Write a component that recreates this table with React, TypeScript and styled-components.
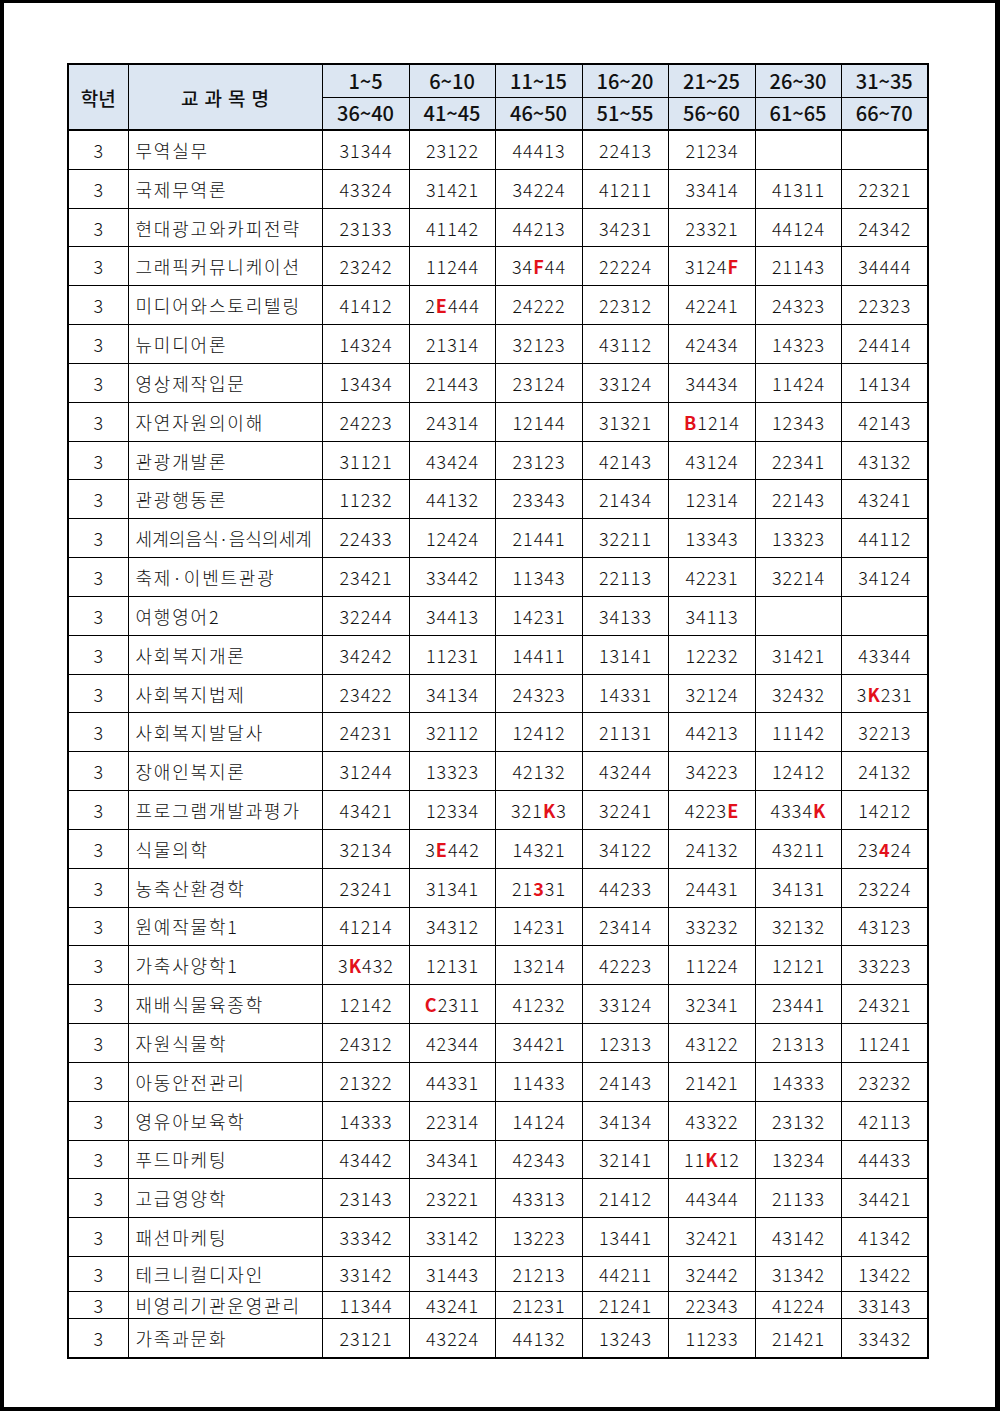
import React from "react";
import styled, { createGlobalStyle } from "styled-components";

const GlobalStyle = createGlobalStyle`
  html, body {
    margin: 0;
    padding: 0;
    background: #ffffff;
  }
`;

const Page = styled.div`
  box-sizing: border-box;
  width: 1000px;
  height: 1411px;
  border-style: solid;
  border-color: #000;
  border-width: 3px 5px 4px 4px;
  background: #fff;
  padding: 60px 0 0 63px;
  font-family: "Noto Sans CJK KR", "Noto Sans", sans-serif;
`;

const Table = styled.table`
  border-collapse: collapse;
  table-layout: fixed;
  width: 860px;
  border: 2px solid #000;
`;

const HeadCell = styled.th<{ $tall?: boolean; $wide?: boolean }>`
  background: #dce6f2;
  border: 1px solid #000;
  height: ${(p) => (p.$tall ? 64 : 31)}px;
  padding: 0;
  font-size: ${(p) => (p.$tall ? 19 : 20)}px;
  font-weight: 500;
  color: #111;
  text-align: center;
  letter-spacing: ${(p) => (p.$wide ? "6px" : "0")};
  text-indent: ${(p) => (p.$wide ? "6px" : "0")};
  line-height: 1;
`;

const HeadRow = styled.tr<{ $last?: boolean }>`
  border-bottom: ${(p) => (p.$last ? "2px solid #000" : "1px solid #000")};
`;

const Cell = styled.td<{ $h: number }>`
  border: 1px solid #000;
  height: ${(p) => p.$h}px;
  padding: 0;
  font-size: 18px;
  font-weight: 300;
  color: #111;
  text-align: center;
  letter-spacing: 1px;
  text-indent: 1px;
  line-height: 1;
  white-space: nowrap;
`;

const NameCell = styled(Cell)<{ $tight?: boolean }>`
  text-align: left;
  text-indent: 0;
  padding-left: 7px;
  letter-spacing: ${(p) => (p.$tight ? "0.1px" : "1.8px")};
`;

const Mark = styled.span`
  color: #e3111b;
  font-weight: 600;
`;

type Row = [string, string[]];

const rows: Row[] = [
  ["무역실무", ["31344", "23122", "44413", "22413", "21234", "", ""]],
  ["국제무역론", ["43324", "31421", "34224", "41211", "33414", "41311", "22321"]],
  ["현대광고와카피전략", ["23133", "41142", "44213", "34231", "23321", "44124", "24342"]],
  ["그래픽커뮤니케이션", ["23242", "11244", "34[F]44", "22224", "3124[F]", "21143", "34444"]],
  ["미디어와스토리텔링", ["41412", "2[E]444", "24222", "22312", "42241", "24323", "22323"]],
  ["뉴미디어론", ["14324", "21314", "32123", "43112", "42434", "14323", "24414"]],
  ["영상제작입문", ["13434", "21443", "23124", "33124", "34434", "11424", "14134"]],
  ["자연자원의이해", ["24223", "24314", "12144", "31321", "[B]1214", "12343", "42143"]],
  ["관광개발론", ["31121", "43424", "23123", "42143", "43124", "22341", "43132"]],
  ["관광행동론", ["11232", "44132", "23343", "21434", "12314", "22143", "43241"]],
  ["세계의음식·음식의세계", ["22433", "12424", "21441", "32211", "13343", "13323", "44112"]],
  ["축제·이벤트관광", ["23421", "33442", "11343", "22113", "42231", "32214", "34124"]],
  ["여행영어2", ["32244", "34413", "14231", "34133", "34113", "", ""]],
  ["사회복지개론", ["34242", "11231", "14411", "13141", "12232", "31421", "43344"]],
  ["사회복지법제", ["23422", "34134", "24323", "14331", "32124", "32432", "3[K]231"]],
  ["사회복지발달사", ["24231", "32112", "12412", "21131", "44213", "11142", "32213"]],
  ["장애인복지론", ["31244", "13323", "42132", "43244", "34223", "12412", "24132"]],
  ["프로그램개발과평가", ["43421", "12334", "321[K]3", "32241", "4223[E]", "4334[K]", "14212"]],
  ["식물의학", ["32134", "3[E]442", "14321", "34122", "24132", "43211", "23[4]24"]],
  ["농축산환경학", ["23241", "31341", "21[3]31", "44233", "24431", "34131", "23224"]],
  ["원예작물학1", ["41214", "34312", "14231", "23414", "33232", "32132", "43123"]],
  ["가축사양학1", ["3[K]432", "12131", "13214", "42223", "11224", "12121", "33223"]],
  ["재배식물육종학", ["12142", "[C]2311", "41232", "33124", "32341", "23441", "24321"]],
  ["자원식물학", ["24312", "42344", "34421", "12313", "43122", "21313", "11241"]],
  ["아동안전관리", ["21322", "44331", "11433", "24143", "21421", "14333", "23232"]],
  ["영유아보육학", ["14333", "22314", "14124", "34134", "43322", "23132", "42113"]],
  ["푸드마케팅", ["43442", "34341", "42343", "32141", "11[K]12", "13234", "44433"]],
  ["고급영양학", ["23143", "23221", "43313", "21412", "44344", "21133", "34421"]],
  ["패션마케팅", ["33342", "33142", "13223", "13441", "32421", "43142", "41342"]],
  ["테크니컬디자인", ["33142", "31443", "21213", "44211", "32442", "31342", "13422"]],
  ["비영리기관운영관리", ["11344", "43241", "21231", "21241", "22343", "41224", "33143"]],
  ["가족과문화", ["23121", "43224", "44132", "13243", "11233", "21421", "33432"]],
];

const rowHeight = (i: number) => {
  if (i === 29) return 34;
  if (i === 30) return 26;
  if (i === 31) return 37.5;
  return 37.83;
};

const topRanges = ["1~5", "6~10", "11~15", "16~20", "21~25", "26~30", "31~35"];
const bottomRanges = ["36~40", "41~45", "46~50", "51~55", "56~60", "61~65", "66~70"];
const colWidths = [60, 194, 87, 86, 87, 86, 87, 86, 87];

const Code = ({ value }: { value: string }) => {
  const parts = value.split(/(\[[^\]]+\])/).filter(Boolean);
  return (
    <>
      {parts.map((p, i) =>
        p.startsWith("[") ? <Mark key={i}>{p.slice(1, -1)}</Mark> : <span key={i}>{p}</span>
      )}
    </>
  );
};

export default function App() {
  return (
    <>
      <GlobalStyle />
      <Page>
        <Table>
          <colgroup>
            {colWidths.map((w, i) => (
              <col key={i} style={{ width: w }} />
            ))}
          </colgroup>
          <thead>
            <HeadRow>
              <HeadCell rowSpan={2} $tall>
                학년
              </HeadCell>
              <HeadCell rowSpan={2} $tall $wide>
                교과목명
              </HeadCell>
              {topRanges.map((r) => (
                <HeadCell key={r}>{r}</HeadCell>
              ))}
            </HeadRow>
            <HeadRow $last>
              {bottomRanges.map((r) => (
                <HeadCell key={r}>{r}</HeadCell>
              ))}
            </HeadRow>
          </thead>
          <tbody>
            {rows.map(([name, codes], i) => (
              <tr key={name}>
                <Cell $h={rowHeight(i)}>3</Cell>
                <NameCell $h={rowHeight(i)} $tight={name.length > 10}>
                  {name}
                </NameCell>
                {codes.map((c, j) => (
                  <Cell key={j} $h={rowHeight(i)}>
                    <Code value={c} />
                  </Cell>
                ))}
              </tr>
            ))}
          </tbody>
        </Table>
      </Page>
    </>
  );
}
